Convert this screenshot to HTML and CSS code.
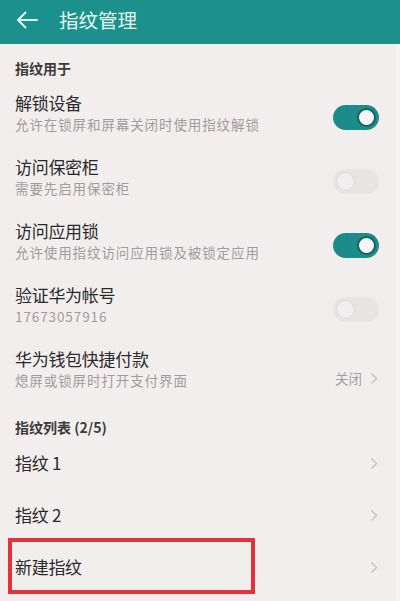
FILE: index.html
```html
<!DOCTYPE html>
<html lang="zh-CN">
<head>
<meta charset="utf-8">
<title>指纹管理</title>
<link rel="stylesheet" href="styles.css">
</head>
<body>
<div class="screen">
  <header class="appbar">
    <svg class="back" width="22" height="18" viewBox="0 0 22 18" aria-hidden="true">
      <path d="M21 9H2.5M9.5 1.5L2 9l7.5 7.5" fill="none" stroke="#e2f4f2" stroke-width="2" stroke-linecap="round" stroke-linejoin="round"/>
    </svg>
    <h1 class="appbar-title">指纹管理</h1>
  </header>

  <div class="section-title first">指纹用于</div>

  <div class="row two">
    <div class="text">
      <div class="title">解锁设备</div>
      <div class="sub">允许在锁屏和屏幕关闭时使用指纹解锁</div>
    </div>
    <span class="switch on"><span class="knob"></span></span>
  </div>

  <div class="row two">
    <div class="text">
      <div class="title">访问保密柜</div>
      <div class="sub">需要先启用保密柜</div>
    </div>
    <span class="switch off"><span class="knob"></span></span>
  </div>

  <div class="row two">
    <div class="text">
      <div class="title">访问应用锁</div>
      <div class="sub">允许使用指纹访问应用锁及被锁定应用</div>
    </div>
    <span class="switch on"><span class="knob"></span></span>
  </div>

  <div class="row two">
    <div class="text">
      <div class="title">验证华为帐号</div>
      <div class="sub">17673057916</div>
    </div>
    <span class="switch off"><span class="knob"></span></span>
  </div>

  <div class="row two">
    <div class="text">
      <div class="title">华为钱包快捷付款</div>
      <div class="sub">熄屏或锁屏时打开支付界面</div>
    </div>
    <span class="value">关闭<svg class="chev" width="8" height="13" viewBox="0 0 8 13"><path d="M1.5 1.5l5 5-5 5" fill="none" stroke="#c4c0c0" stroke-width="1.3"/></svg></span>
  </div>

  <div class="section-title second">指纹列表 (2/5)</div>

  <div class="row one">
    <div class="title">指纹 1</div>
    <svg class="chev" width="8" height="13" viewBox="0 0 8 13"><path d="M1.5 1.5l5 5-5 5" fill="none" stroke="#c4c0c0" stroke-width="1.3"/></svg>
  </div>

  <div class="row one">
    <div class="title">指纹 2</div>
    <svg class="chev" width="8" height="13" viewBox="0 0 8 13"><path d="M1.5 1.5l5 5-5 5" fill="none" stroke="#c4c0c0" stroke-width="1.3"/></svg>
  </div>

  <div class="row one marked">
    <div class="title">新建指纹</div>
    <svg class="chev" width="8" height="13" viewBox="0 0 8 13"><path d="M1.5 1.5l5 5-5 5" fill="none" stroke="#c4c0c0" stroke-width="1.3"/></svg>
    <span class="highlight"></span>
  </div>
</div>
</body>
</html>
```

FILE: styles.css
```css
html, body {
  margin: 0;
  padding: 0;
  background: #f3eeee;
}

body {
  font-family: "Noto Sans CJK SC", "Noto Sans", sans-serif;
  color: #2a2a2a;
}

.screen {
  width: 400px;
  height: 601px;
  overflow: hidden;
  background: #f3eeee;
  box-shadow: inset -4px 0 0 #f7f4f4;
}

.appbar {
  height: 44px;
  background: #1c918c;
  display: flex;
  align-items: center;
  padding-left: 16px;
  box-sizing: border-box;
}

.back {
  display: block;
  margin-top: -4px;
}

.appbar-title {
  margin: -5px 0 0 21px;
  font-size: 19.5px;
  font-weight: 400;
  color: #e2f4f2;
  letter-spacing: 0;
  line-height: 26px;
}

.section-title {
  padding: 0 15px;
  font-size: 14px;
  font-weight: 700;
  color: #3c3c3c;
  line-height: 20px;
}

.section-title.first {
  padding-top: 14px;
  padding-bottom: 3px;
}

.section-title.second {
  padding-top: 16px;
  padding-bottom: 0;
}

.row {
  display: flex;
  align-items: center;
  justify-content: space-between;
  padding: 0 21px 0 15px;
  box-sizing: border-box;
  position: relative;
}

.row.two {
  height: 64px;
}

.row.one {
  height: 52px;
}

.text {
  display: flex;
  flex-direction: column;
}

.title {
  font-size: 17px;
  line-height: 22px;
  color: #2a2a2a;
  letter-spacing: -0.3px;
}

.sub {
  font-size: 13.5px;
  line-height: 20px;
  color: #a09c9c;
  letter-spacing: 0.9px;
}

.switch {
  width: 46px;
  height: 25px;
  border-radius: 13px;
  box-sizing: border-box;
  display: flex;
  align-items: center;
  padding: 0 3px;
  margin-top: 8px;
  flex-shrink: 0;
}

.switch.on {
  background: #1b8c87;
  justify-content: flex-end;
}

.switch.off {
  background: #e7e4e4;
  justify-content: flex-start;
}

.knob {
  width: 19px;
  height: 19px;
  border-radius: 50%;
  box-sizing: border-box;
}

.switch.on .knob {
  background: #f6f4f4;
  border: 2px solid #16645f;
}

.switch.off .knob {
  background: #efeded;
  border: 1px solid #dcd9d9;
}

.value {
  display: flex;
  align-items: center;
  gap: 8px;
  font-size: 13.5px;
  color: #a4a0a0;
  margin-top: 18px;
  margin-right: 1px;
}

.chev {
  display: block;
  flex-shrink: 0;
}

.row.one .chev {
  margin-right: 1px;
}

.highlight {
  position: absolute;
  left: 8px;
  top: -3px;
  width: 247px;
  height: 56px;
  border: 4px solid #e0333b;
  box-sizing: border-box;
  pointer-events: none;
}
```
